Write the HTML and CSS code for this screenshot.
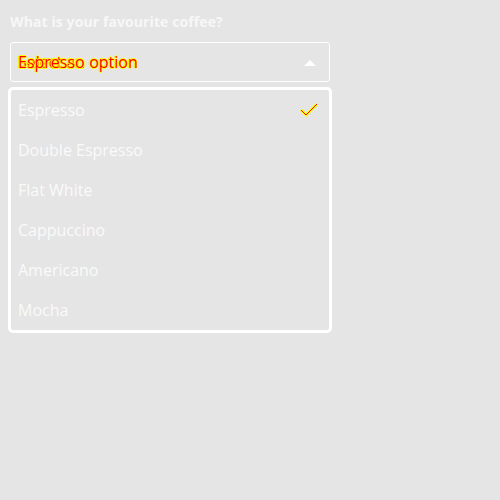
FILE: index.html
```html
<!DOCTYPE html>
<html>
<head>
<meta charset="utf-8">
<link rel="stylesheet" href="styles.css">
</head>
<body>
<div class="field">
  <label class="label">What is your favourite coffee?</label>
  <div class="select">
    <span class="value">
      <span class="layer">Select an option</span>
      <span class="layer">Espresso</span>
    </span>
    <svg class="arrow" width="12" height="7" viewBox="0 0 12 7"><path d="M0 7 L6 1 L12 7 Z" fill="#fff"/></svg>
  </div>
  <ul class="list">
    <li class="option">Espresso
      <svg class="check" width="20" height="16" viewBox="0 0 20 16"><path d="M2 8 L7 13 L18 2" fill="none" stroke="#ff0" stroke-width="3"/><path d="M2 8 L7 13 L18 2" fill="none" stroke="#f00" stroke-width="1"/></svg>
    </li>
    <li class="option">Double Espresso</li>
    <li class="option">Flat White</li>
    <li class="option">Cappuccino</li>
    <li class="option">Americano</li>
    <li class="option">Mocha</li>
  </ul>
</div>
</body>
</html>
```
FILE: styles.css
```css
html, body {
  margin: 0;
  background: #e5e5e5;
  font-family: "Open Sans", sans-serif;
}
.field {
  padding: 12px 0 0 8px;
  width: 324px;
}
.label {
  display: block;
  margin-left: 2px;
  font-weight: 700;
  font-size: 14px;
  line-height: 19px;
  letter-spacing: 0.1px;
  color: #f7f7f7;
}
.select {
  margin: 11px 2px 0 2px;
  height: 38px;
  border: 1px solid #fff;
  border-radius: 3px;
  display: flex;
  align-items: center;
  justify-content: space-between;
  padding: 0 13px 0 7px;
}
.value {
  display: grid;
  font-size: 16px;
}
.layer {
  grid-area: 1 / 1;
  color: #f00;
  text-shadow: 1px 0 0 #ff0, -1px 0 0 #ff0, 0 1px 0 #ff0, 0 -1px 0 #ff0;
}
.arrow { display: block; }
.list {
  list-style: none;
  margin: 5px 0 0 0;
  padding: 0;
  border: 3px solid #fff;
  border-radius: 5px;
}
.option {
  height: 40px;
  display: flex;
  align-items: center;
  justify-content: space-between;
  padding: 0 10px 0 7px;
  font-size: 16px;
  color: #fafafa;
}
.check { display: block; }
```
